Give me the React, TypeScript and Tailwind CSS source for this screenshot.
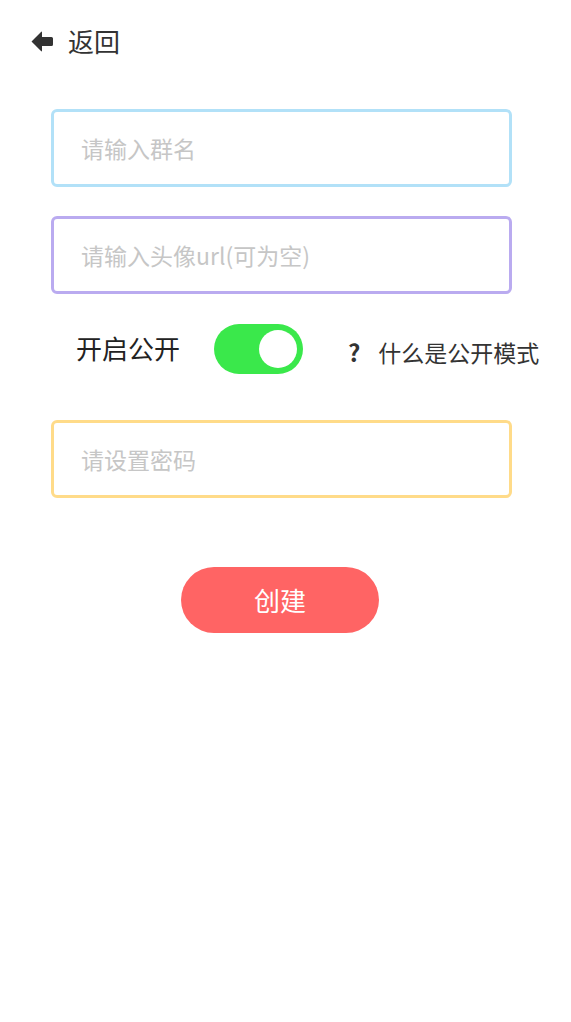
import { useState } from "react";

const font = { fontFamily: '"Noto Sans CJK SC", "Noto Sans", sans-serif' };

const Field = ({ placeholder, border }: { placeholder: string; border: string }) => (
  <div className={`ml-[51px] w-[461px] h-[78px] rounded-[6px] border-[3px] ${border} flex items-center`}>
    <input
      placeholder={placeholder}
      className="w-full bg-transparent outline-none pl-[27px] text-[23px] text-[#333] placeholder:text-[#c6c6c6]"
      style={font}
    />
  </div>
);

const App = () => {
  const [open, setOpen] = useState(true);

  return (
    <div className="w-[571px] min-h-[1022px] bg-white" style={font}>
      {/* header */}
      <div className="flex items-center pt-[22px] pl-[31px] h-[60px]">
        <svg width="22" height="21" viewBox="0 0 22 21" className="text-[#333]">
          <path
            fill="currentColor"
            d="M0.5 10.5 L10 1 Q11 0 11 1.5 L11 6 L20.5 6 Q22 6 22 7.5 L22 13.5 Q22 15 20.5 15 L11 15 L11 19.5 Q11 21 10 20 Z"
          />
        </svg>
        <span className="ml-[15px] text-[26px] text-[#333] leading-none">返回</span>
      </div>

      <div className="mt-[49px]">
        <Field placeholder="请输入群名" border="border-[#b2e1f8]" />
      </div>
      <div className="mt-[29px]">
        <Field placeholder="请输入头像url(可为空)" border="border-[#baabf0]" />
      </div>

      {/* public toggle */}
      <div className="flex items-center mt-[30px] h-[50px]">
        <span className="ml-[76px] text-[26px] text-[#222] leading-none -mt-[2px]">开启公开</span>
        <button
          onClick={() => setOpen(!open)}
          className={`ml-[34px] w-[89px] h-[50px] rounded-full flex items-center px-[6px] ${
            open ? "bg-[#3ae84b] justify-end" : "bg-[#ddd] justify-start"
          }`}
        >
          <span className="block w-[38px] h-[38px] rounded-full bg-white" />
        </button>
        <div className="ml-[45px] flex items-center mt-[6px]">
          <span className="text-[24px] font-bold text-[#333] leading-none">?</span>
          <span className="ml-[18px] text-[23px] text-[#333] leading-none">什么是公开模式</span>
        </div>
      </div>

      <div className="mt-[46px]">
        <Field placeholder="请设置密码" border="border-[#ffdb89]" />
      </div>

      <div className="flex mt-[69px]">
        <button className="ml-[181px] w-[198px] h-[66px] rounded-full bg-[#ff6464] text-white text-[26px] leading-none">
          创建
        </button>
      </div>
    </div>
  );
};

export default App;
